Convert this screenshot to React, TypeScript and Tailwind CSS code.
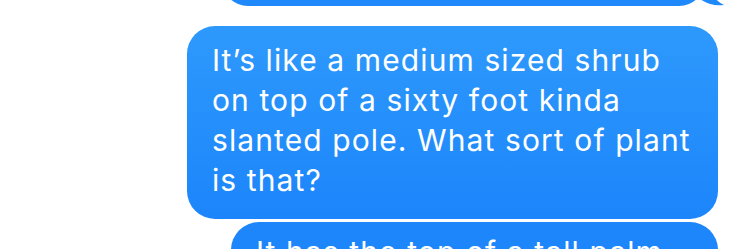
export default function App() {
  return (
    <div className="w-[749px] h-[249px] overflow-hidden bg-white font-['Inter','Helvetica',sans-serif]">
      <div className="flex flex-col items-end pr-[31px]">
        {/* previous bubble, mostly scrolled off */}
        <div className="relative mt-[-74px] mr-[13px] w-[483px] h-[80px] rounded-[26px] bg-[#1f89fb]">
          <svg
            className="absolute right-[-20px] bottom-0"
            width="28"
            height="26"
            viewBox="0 0 28 26"
          >
            <path d="M0 0 H12 C12 12 17 20 27 25 C18 26 10 24 3 19 C1 17 0 14 0 10 Z" fill="#1f89fb" />
          </svg>
        </div>

        <div className="mt-[20px] w-[531px] h-[193px] rounded-[28px] bg-gradient-to-b from-[#2e99fc] to-[#1c85fb] px-[25px] pt-[14px] text-white text-[30px] leading-[40px] tracking-[1.1px] whitespace-nowrap">
          It’s like a medium sized shrub
          <br />
          on top of a sixty foot kinda
          <br />
          slanted pole. What sort of plant
          <br />
          is that?
        </div>

        <div className="mt-[3px] w-[487px] h-[80px] overflow-hidden rounded-[28px] bg-[#1d86fb] px-[25px] pt-[10px] text-white text-[30px] leading-[40px] tracking-[1.1px] whitespace-nowrap">
          It has the top of a tall palm
        </div>
      </div>
    </div>
  );
}
